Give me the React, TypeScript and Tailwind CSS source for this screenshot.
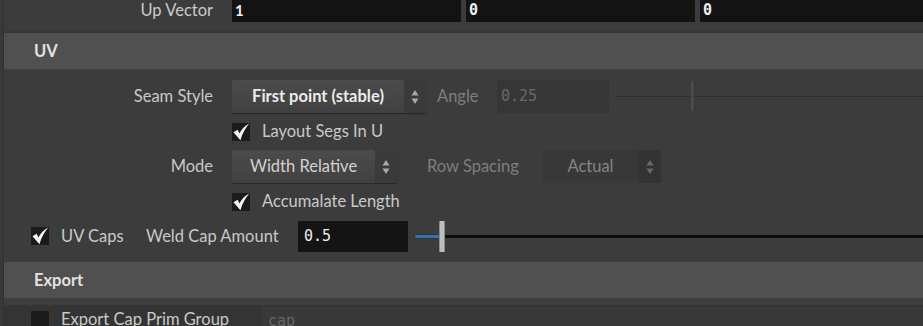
const ui = { fontFamily: "Lato, 'Open Sans', sans-serif" };
const mono = { fontFamily: "'DejaVu Sans Mono', 'Liberation Mono', monospace" };

const Check = ({ on = true }: { on?: boolean }) => (
  <span className="w-[18px] h-[18px] bg-[#1b1b1b] flex items-center justify-center shrink-0">
    {on && (
      <svg width="18" height="18" viewBox="0 0 18 18">
        <path
          d="M1.5 9.2 L5.6 6.8 L7.4 10.4 C9.6 6.4 12.6 3 17.2 0.6 C13.6 5 10.6 10 8.4 17.2 Z"
          fill="#f4f4f4"
        />
      </svg>
    )}
  </span>
);

const Arrows = ({ dim = false }: { dim?: boolean }) => (
  <svg width="8" height="16" viewBox="0 0 8 16">
    <path d="M4 1 L7.5 6.5 H0.5 Z" fill={dim ? "#6a6a6a" : "#a8a8a8"} />
    <path d="M4 15 L7.5 9.5 H0.5 Z" fill={dim ? "#6a6a6a" : "#a8a8a8"} />
  </svg>
);

const Menu = ({
  text,
  width,
  bold = false,
  dim = false,
}: {
  text: string;
  width: string;
  bold?: boolean;
  dim?: boolean;
}) => (
  <div
    className={`${width} h-[33px] flex rounded-[2px] ${
      dim
        ? "bg-[#383838]"
        : "bg-gradient-to-b from-[#4b4b4b] to-[#414141] shadow-[0_1px_1px_#262626]"
    }`}
  >
    <div
      className={`flex-1 flex items-center justify-center text-[16.5px] ${
        bold ? "font-bold text-[#ececec]" : dim ? "text-[#858585]" : "text-[#d2d2d2]"
      }`}
    >
      {text}
    </div>
    <div
      className={`w-[22px] flex items-center justify-center ${
        dim ? "bg-[#333333]" : "bg-[#3a3a3a]"
      }`}
    >
      <Arrows dim={dim} />
    </div>
  </div>
);

export default function App() {
  return (
    <div
      className="w-[923px] h-[326px] overflow-hidden bg-[#3c3c3c] flex text-[16.5px]"
      style={ui}
    >
      <div className="w-[4px] bg-[#393939] border-r border-[#2f2f2f] shrink-0" />
      <div className="flex-1 flex flex-col overflow-hidden [&>*]:shrink-0">
        {/* Up Vector */}
        <div className="h-[23px] flex items-start">
          <div className="w-[209px] shrink-0 text-right text-[#c9c9c9] leading-[20px]">
            Up Vector
          </div>
          <div className="ml-[19px] flex gap-[5px] flex-1">
            {["1", "0", "0"].map((v, i) => (
              <div
                key={i}
                className={`${i === 2 ? "flex-1" : "w-[229px]"} h-[22px] bg-[#131313] text-[15px] font-bold text-[#f0f0f0] pl-[3px] leading-[20px]`}
                style={i === 0 ? ui : mono}
              >
                {v}
              </div>
            ))}
          </div>
        </div>
        <div className="h-[10px] border-b-2 border-[#373737]" />

        {/* UV header */}
        <div className="h-[37px] bg-[#505050] flex items-center pl-[30px] font-bold text-[#e2e2e2] border-b border-[#444444]">
          UV
        </div>
        <div className="h-[10px]" />

        {/* Seam Style */}
        <div className="h-[33px] flex items-center">
          <div className="w-[209px] shrink-0 text-right text-[#c9c9c9]">Seam Style</div>
          <div className="ml-[19px]">
            <Menu text="First point (stable)" width="w-[194px]" bold />
          </div>
          <div className="ml-[11px] w-[60px] text-[#7e7e7e]">Angle</div>
          <div
            className="w-[112px] h-[33px] bg-[#363636] text-[15px] text-[#6a6a6a] flex items-center pl-[4px]"
            style={mono}
          >
            0.25
          </div>
          <div className="ml-[6px] flex-1 relative h-[33px] flex items-center">
            <div className="w-full h-px bg-[#2e2e2e]" />
            <div className="absolute left-[76px] top-[1px] w-[4px] h-[30px] bg-[#4a4a4a] border-r border-[#353535]" />
          </div>
        </div>

        {/* Layout Segs In U */}
        <div className="h-[37px] flex items-center pl-[228px] gap-[12px] text-[#c9c9c9]">
          <Check />
          <span>Layout Segs In U</span>
        </div>

        {/* Mode */}
        <div className="h-[33px] flex items-center">
          <div className="w-[209px] shrink-0 text-right text-[#c9c9c9]">Mode</div>
          <div className="ml-[19px]">
            <Menu text="Width Relative" width="w-[165px]" />
          </div>
          <div className="ml-[30px] w-[115px] text-[#7e7e7e]">Row Spacing</div>
          <Menu text="Actual" width="w-[119px]" dim />
        </div>

        {/* Accumalate Length */}
        <div className="h-[37px] flex items-center pl-[228px] gap-[12px] text-[#c9c9c9]">
          <Check />
          <span>Accumalate Length</span>
        </div>

        {/* UV Caps */}
        <div className="h-[32px] flex items-center text-[#c9c9c9]">
          <div className="ml-[27px] mr-[12px]">
            <Check />
          </div>
          <span className="w-[85px]">UV Caps</span>
          <span className="w-[152px]">Weld Cap Amount</span>
          <div
            className="w-[110px] h-[31px] bg-[#141414] text-[15px] text-[#eeeeee] flex items-center pl-[6px]"
            style={mono}
          >
            0.5
          </div>
          <div className="ml-[7px] flex-1 flex items-center h-[32px]">
            <div className="w-[24px] h-[3px] bg-[#3f6fa0] rounded-l-full shadow-[0_0_0_1px_#24384c]" />
            <div className="w-[6px] h-[31px] bg-[#bdbdbd] border-x border-[#8a8a8a] shrink-0" />
            <div className="flex-1 h-[3px] bg-[#0c0c0c]" />
          </div>
        </div>
        <div className="h-[10px]" />

        {/* Export header */}
        <div className="h-[36px] bg-[#505050] flex items-center pl-[30px] font-bold text-[#e2e2e2]">
          Export
        </div>
        <div className="h-[7px] bg-[#3e3e3e]" />

        {/* Export Cap Prim Group */}
        <div className="h-[40px] bg-[#343434] flex items-start text-[#c9c9c9]">
          <div className="ml-[27px] mr-[12px] mt-[6px]">
            <Check on={false} />
          </div>
          <span className="w-[201px] mt-[2px]">Export Cap Prim Group</span>
          <div
            className="mt-[1px] flex-1 h-[30px] bg-[#393939] text-[15px] text-[#666666] pl-[6px] pt-[4px]"
            style={mono}
          >
            cap
          </div>
        </div>
      </div>
    </div>
  );
}
